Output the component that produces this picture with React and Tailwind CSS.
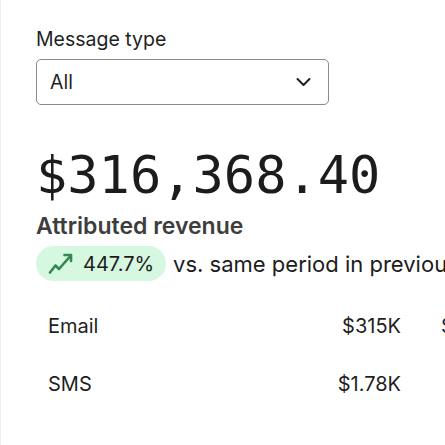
import React from "react";

export default function App() {
  return (
    <div className="w-[445px] h-[445px] overflow-hidden bg-white border-l border-[#ececec]" style={{ fontFamily: "Inter, 'Noto Sans', sans-serif" }}>
      <div className="pl-[35px] pt-[27px]">
        <div className="text-[19.5px] leading-[24px] text-[#1f1f1f]">Message type</div>
        <div className="mt-[8px] w-[293px] h-[46px] rounded-[5px] border border-[#8a8a8a] flex items-center justify-between pl-[13px] pr-[17px]">
          <span className="text-[19.5px] leading-[24px] text-[#1f1f1f]">All</span>
          <svg width="15" height="10" viewBox="0 0 15 10" fill="none">
            <path d="M1.5 2 L7.5 8 L13.5 2" stroke="#1f1f1f" strokeWidth="2" strokeLinecap="round" strokeLinejoin="round" />
          </svg>
        </div>
        <div className="mt-[42px] text-[52px] leading-[56px] text-[#1c1c1c] whitespace-nowrap" style={{ fontFamily: "'DejaVu Sans Mono', monospace" }}>
          $316,368.40
        </div>
        <div className="mt-[9px] text-[23px] leading-[28px] font-semibold text-[#3d3d3d]">Attributed revenue</div>
        <div className="mt-[6px] flex items-center gap-[7px] whitespace-nowrap">
          <div className="shrink-0 h-[35px] rounded-full bg-[#d6f7e0] flex items-center pl-[12px] pr-[12px] gap-[10px]">
            <svg width="25" height="21" viewBox="0 0 25 21" fill="none">
              <path d="M2 19.5 L7.5 12.5 L11 16 L21.5 4" stroke="#2f8a4f" strokeWidth="2.6" strokeLinecap="round" strokeLinejoin="round" />
              <path d="M16.5 2 L23 2 L23 8" stroke="#2f8a4f" strokeWidth="2.6" strokeLinecap="round" strokeLinejoin="round" />
            </svg>
            <span className="text-[20px] leading-[24px] text-[#1c1c1c]">447.7%</span>
          </div>
          <span className="shrink-0 text-[22px] leading-[28px] text-[#1c1c1c]">vs. same period in previous year</span>
        </div>
        <div className="mt-[16px]">
          <div className="flex items-center py-[17px] pl-[12px] whitespace-nowrap">
            <span className="shrink-0 w-[260px] text-[20px] leading-[24px] text-[#1f1f1f]">Email</span>
            <span className="shrink-0 w-[93px] text-right text-[20px] leading-[24px] text-[#1f1f1f]">$315K</span>
            <span className="shrink-0 ml-[40px] text-[20px] leading-[24px] text-[#1f1f1f]">$1.2K</span>
          </div>
          <div className="flex items-center py-[17px] pl-[12px] whitespace-nowrap">
            <span className="shrink-0 w-[260px] text-[20px] leading-[24px] text-[#1f1f1f]">SMS</span>
            <span className="shrink-0 w-[93px] text-right text-[20px] leading-[24px] text-[#1f1f1f]">$1.78K</span>
            <span className="shrink-0 ml-[60px] text-[20px] leading-[24px] text-[#1f1f1f]">$0</span>
          </div>
        </div>
      </div>
    </div>
  );
}
